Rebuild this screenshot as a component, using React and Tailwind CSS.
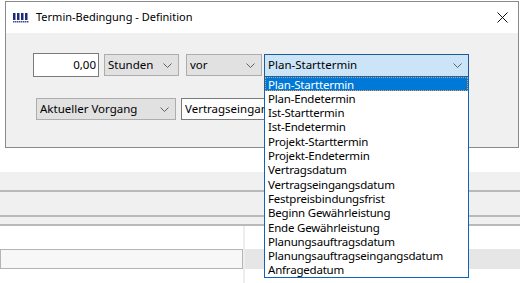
import React from 'react';

const FONT = { fontFamily: '"Segoe UI", "Noto Sans", "Open Sans", sans-serif' };

const ITEMS = [
  'Plan-Starttermin',
  'Plan-Endetermin',
  'Ist-Starttermin',
  'Ist-Endetermin',
  'Projekt-Starttermin',
  'Projekt-Endetermin',
  'Vertragsdatum',
  'Vertragseingangsdatum',
  'Festpreisbindungsfrist',
  'Beginn Gewährleistung',
  'Ende Gewährleistung',
  'Planungsauftragsdatum',
  'Planungsauftragseingangsdatum',
  'Anfragedatum',
];

const Chevron = () => (
  <svg width="9" height="5" viewBox="0 0 9 5" className="shrink-0">
    <path d="M0.5 0.5 L4.5 4.5 L8.5 0.5" fill="none" stroke="#606060" strokeWidth="1" />
  </svg>
);

const Combo = ({ label, className }) => (
  <div className={`flex items-center justify-between pl-[3px] pr-[6px] border text-[11.5px] text-black overflow-hidden ${className}`}>
    <span className="whitespace-nowrap overflow-hidden">{label}</span>
    <Chevron />
  </div>
);

const AppIcon = () => (
  <svg width="16" height="10" viewBox="0 0 16 10">
    {[0, 4, 8, 12].map((x) => (
      <rect key={x} x={x} y="0" width="2.5" height="7" fill="#1c2a7a" />
    ))}
    {[0, 2, 4, 6, 8, 10, 12, 14].map((x) => (
      <rect key={x} x={x} y="8" width="1.5" height="1.5" fill="#3a4a9a" />
    ))}
  </svg>
);

export default function App() {
  return (
    <div className="relative w-[520px] h-[283px] overflow-hidden bg-white" style={FONT}>
      {/* underlying application */}
      <div className="flex flex-col w-full h-full">
        <div className="h-[172px] bg-white" />
        <div className="h-[18px] bg-[#f0f0f0]" />
        <div className="h-[2px] bg-[#b9b9b9]" />
        <div className="h-[23px] bg-[#f0f0f0]" />
        <div className="h-[2px] bg-[#b9b9b9]" />
        <div className="h-[7px] bg-[#f0f0f0]" />
        <div className="h-[2px] bg-[#b9b9b9]" />
        <div className="flex flex-1">
          <div className="w-[243px] flex flex-col pt-[23px]">
            <div className="h-[20px] bg-[#f7f7f7] border border-[#b4b4b4]" />
          </div>
          <div className="w-[2px] bg-[#ededed]" />
          <div className="flex-1 flex flex-col pt-[23px]">
            <div className="h-[20px] bg-[#e6e6e6]" />
          </div>
        </div>
      </div>

      {/* dialog window */}
      <div className="absolute left-[5px] top-[1px] w-[514px] h-[147px] border border-[#8a8a8a] bg-[#f0f0f0] flex flex-col">
        <div className="h-[31px] bg-white flex items-center pl-[7px] pr-[10px] shrink-0">
          <AppIcon />
          <span className="ml-[7px] text-[11px] text-black">Termin-Bedingung - Definition</span>
          <div className="flex-1" />
          <svg width="11" height="11" viewBox="0 0 11 11">
            <path d="M0.5 0.5 L10.5 10.5 M10.5 0.5 L0.5 10.5" stroke="#111" strokeWidth="1" />
          </svg>
        </div>
        <div className="flex flex-col pt-[20px]">
          <div className="flex items-center h-[24px] pl-[27px]">
            <div className="w-[66px] h-[24px] bg-white border border-[#7a7a7a] flex items-center justify-end pr-[2px] text-[11.5px] text-black">
              0,00
            </div>
            <Combo label="Stunden" className="ml-[5px] w-[75px] h-[22px] bg-[#e1e1e1] border-[#adadad]" />
            <Combo label="vor" className="ml-[7px] w-[76px] h-[22px] bg-[#e1e1e1] border-[#adadad]" />
            <Combo label="Plan-Starttermin" className="ml-[2px] w-[205px] h-[23px] bg-[#cce4f7] border-[#1e5a96]" />
          </div>
          <div className="flex items-center h-[22px] pl-[30px] mt-[21px]">
            <Combo label="Aktueller Vorgang" className="w-[140px] h-[22px] bg-[#e1e1e1] border-[#adadad]" />
            <Combo label="Vertragseingangsdatum" className="ml-[5px] w-[288px] h-[22px] bg-[#fdfdfd] border-[#7a7a7a]" />
          </div>
        </div>
      </div>

      {/* open dropdown list */}
      <div className="absolute left-[264px] top-[76px] w-[205px] h-[202px] bg-white border border-[#0b64c0] flex flex-col text-[11.5px] tracking-[-0.2px] text-black">
        {ITEMS.map((item, i) => (
          <div
            key={item}
            className={`h-[14.3px] shrink-0 flex items-center pl-[3px] whitespace-nowrap ${
              i === 0 ? 'bg-[#0078d7] text-white outline-1 outline-dotted outline-[#f0a040] -outline-offset-1' : ''
            }`}
          >
            {item}
          </div>
        ))}
      </div>
    </div>
  );
}
